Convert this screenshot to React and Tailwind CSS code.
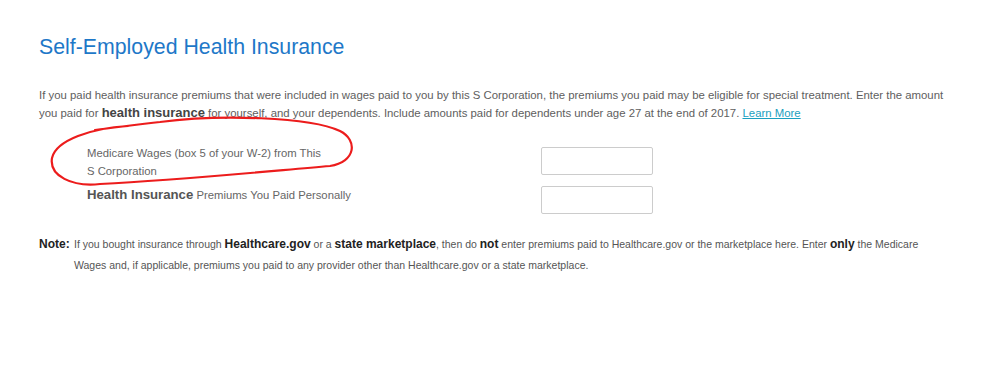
import React from "react";

const App = () => {
  return (
    <div
      className="relative w-[999px] h-[385px] bg-white overflow-hidden"
      style={{ fontFamily: '"Liberation Sans", Arial, sans-serif' }}
    >
      <div className="pl-[39px] pr-[40px] pt-[34px]">
        <h1 className="text-[21.3px] leading-[26px] text-[#1e78c8]">Self-Employed Health Insurance</h1>

        <p className="mt-[26px] w-[918px] text-[11.38px] leading-[18px] text-[#5e5e5e]">
          If you paid health insurance premiums that were included in wages paid to you by this S Corporation, the premiums you paid may be eligible for special treatment. Enter the amount you paid for{" "}
          <b className="text-[#444] font-bold text-[13px] leading-[0]">health insurance</b> for yourself, and your dependents. Include amounts paid for dependents under age 27 at the end of 2017.{" "}
          <a href="#" className="text-[#1aa0c0] underline">Learn More</a>
        </p>

        <div className="mt-[22px] pl-[48px] flex flex-col gap-[3px]">
          <div className="flex items-start h-[36px]">
            <div className="w-[454px] text-[11.3px] leading-[18px] text-[#666]">
              Medicare Wages (box 5 of your W-2) from This
              <br />
              S Corporation
            </div>
            <div className="mt-[3px] w-[112px] h-[28px] border border-[#ccc] rounded-[2px]" />
          </div>
          <div className="flex items-start">
            <div className="w-[454px] text-[11.3px] leading-[18px] text-[#666] pt-[3px]">
              <b className="text-[#555] font-bold text-[13.2px] leading-[0]">Health Insurance</b> Premiums You Paid Personally
            </div>
            <div className="mt-[3px] w-[112px] h-[28px] border border-[#ccc] rounded-[2px]" />
          </div>
        </div>

        <div className="mt-[20px] flex text-[10.5px] leading-[21px] text-[#555]">
          <b className="w-[35px] shrink-0 text-[#222] font-bold text-[12px] leading-[21px]">Note:</b>
          <p className="w-[860px]">
            If you bought insurance through <b className="text-[#222] text-[12px] leading-[0]">Healthcare.gov</b> or a{" "}
            <b className="text-[#222] text-[12px] leading-[0]">state marketplace</b>, then do <b className="text-[#222] text-[12px] leading-[0]">not</b> enter premiums paid to Healthcare.gov or the marketplace here. Enter{" "}
            <b className="text-[#222] text-[12px] leading-[0]">only</b> the Medicare Wages and, if applicable, premiums you paid to any provider other than Healthcare.gov or a state marketplace.
          </p>
        </div>
      </div>

      {/* hand drawn red circle */}
      <svg className="absolute left-0 top-0 pointer-events-none" width="999" height="385">
        <path
          d="M 128 126 C 92 128, 56 140, 52 158 C 49 176, 72 187, 100 184 C 180 180, 260 172, 330 166 C 356 162, 358 140, 340 131 C 310 117, 220 114, 160 122 C 140 124, 120 127, 95 130"
          fill="none"
          stroke="#ec1c1c"
          strokeWidth="2.2"
          strokeLinecap="round"
        />
      </svg>
    </div>
  );
};

export default App;
